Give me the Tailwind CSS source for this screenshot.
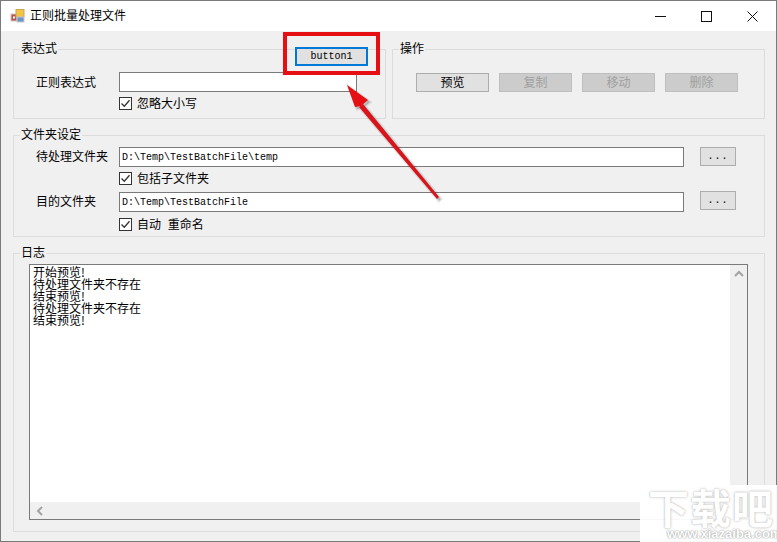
<!DOCTYPE html>
<html lang="zh-CN">
<head>
  <meta charset="UTF-8" />
  <title>正则批量处理文件</title>
  <script src="https://cdn.jsdelivr.net/npm/@tailwindcss/browser@4"></script>
</head>
<body class="overflow-hidden bg-white">
  <div class="relative flex flex-col w-[777px] h-[542px] border border-[#7a7a7a] bg-[#f0f0f0] text-[12px] leading-[14px] text-black font-['Noto_Sans_CJK_SC','Noto_Sans',sans-serif]">

    <!-- title bar -->
    <div class="flex items-center h-[30px] shrink-0 bg-white">
      <svg class="ml-[9px] w-[16px] h-[16px]" viewBox="0 0 16 16">
        <rect x="1" y="6" width="6" height="7" fill="#b9534f" stroke="#c9c9c9"/>
        <rect x="6" y="1.5" width="8" height="7.5" fill="#f3c344" stroke="#c9a85a"/>
        <rect x="7" y="9" width="7" height="5" fill="#6d94c9" stroke="#c9c9c9"/>
        <rect x="3" y="8.5" width="2" height="2" fill="#fff"/>
      </svg>
      <span class="ml-[4px] pb-[2px] text-[12px]">正则批量处理文件</span>
      <div class="ml-auto flex items-center gap-[35px] mr-[18px]">
        <svg class="w-[11px] h-[11px]" viewBox="0 0 11 11"><path d="M0 5.5H11" stroke="#111" fill="none"/></svg>
        <svg class="w-[11px] h-[11px]" viewBox="0 0 11 11"><rect x=".5" y=".5" width="10" height="10" stroke="#111" fill="none"/></svg>
        <svg class="w-[11px] h-[11px]" viewBox="0 0 11 11"><path d="M.5 .5L10.5 10.5M10.5 .5L.5 10.5" stroke="#111" fill="none"/></svg>
      </div>
    </div>

    <div class="flex flex-col pl-[12px] pt-[18px]">
      <div class="flex gap-[6px]">
        <!-- 表达式 -->
        <div class="relative w-[373px] h-[70px] border border-[#dcdcdc] pt-[22px] pl-[22px]">
          <span class="absolute -top-[9px] left-[6px] px-[1px] bg-[#f0f0f0]">表达式</span>
          <div class="flex items-center">
            <span class="w-[83px] pb-[1px]">正则表达式</span>
            <div class="w-[238px] h-[20px] border border-[#7a7a7a] bg-white"></div>
          </div>
          <label class="flex items-center ml-[83px] mt-[5px] h-[13px]">
            <span class="flex items-center justify-center w-[13px] h-[13px] border border-[#333] bg-white">
              <svg class="w-[11px] h-[11px]" viewBox="0 0 11 11"><path d="M1.5 5.5L4.3 8.3L9.5 2.3" stroke="#333" stroke-width="1.3" fill="none"/></svg>
            </span>
            <span class="ml-[5px] pb-[2px]">忽略大小写</span>
          </label>
        </div>
        <!-- 操作 -->
        <div class="relative w-[373px] h-[70px] border border-[#dcdcdc] pt-[23px] pl-[23px]">
          <span class="absolute -top-[9px] left-[6px] px-[1px] bg-[#f0f0f0]">操作</span>
          <div class="flex gap-[10px]">
            <div class="flex items-center justify-center w-[73px] h-[19px] pb-[2px] border border-[#adadad] bg-[#e1e1e1]">预览</div>
            <div class="flex items-center justify-center w-[73px] h-[19px] pb-[2px] border border-[#bfbfbf] bg-[#cccccc] text-[#a0a0a0]">复制</div>
            <div class="flex items-center justify-center w-[73px] h-[19px] pb-[2px] border border-[#bfbfbf] bg-[#cccccc] text-[#a0a0a0]">移动</div>
            <div class="flex items-center justify-center w-[73px] h-[19px] pb-[2px] border border-[#bfbfbf] bg-[#cccccc] text-[#a0a0a0]">删除</div>
          </div>
        </div>
      </div>

      <!-- 文件夹设定 -->
      <div class="relative w-[752px] h-[102px] mt-[16px] border border-[#dcdcdc] pt-[11px] pl-[22px]">
        <span class="absolute -top-[9px] left-[6px] px-[1px] bg-[#f0f0f0]">文件夹设定</span>
        <div class="flex items-center">
          <span class="w-[83px] pb-[2px]">待处理文件夹</span>
          <div class="flex items-center w-[565px] h-[20px] border border-[#7a7a7a] bg-white pl-[2px] pt-[1px] font-['Liberation_Mono',monospace] text-[10px]">D:\Temp\TestBatchFile\temp</div>
          <div class="flex items-center justify-center ml-[16px] -mt-[1px] w-[36px] h-[19px] border border-[#adadad] bg-[#e1e1e1] font-['Liberation_Mono',monospace] text-[10px] tracking-[1px]">...</div>
        </div>
        <label class="flex items-center ml-[83px] mt-[5px] h-[13px]">
          <span class="flex items-center justify-center w-[13px] h-[13px] border border-[#333] bg-white">
            <svg class="w-[11px] h-[11px]" viewBox="0 0 11 11"><path d="M1.5 5.5L4.3 8.3L9.5 2.3" stroke="#333" stroke-width="1.3" fill="none"/></svg>
          </span>
          <span class="ml-[5px] pb-[2px]">包括子文件夹</span>
        </label>
        <div class="flex items-center mt-[7px]">
          <span class="w-[83px] pb-[2px]">目的文件夹</span>
          <div class="flex items-center w-[565px] h-[20px] border border-[#7a7a7a] bg-white pl-[2px] pt-[1px] font-['Liberation_Mono',monospace] text-[10px]">D:\Temp\TestBatchFile</div>
          <div class="flex items-center justify-center ml-[16px] -mt-[3px] w-[36px] h-[19px] border border-[#adadad] bg-[#e1e1e1] font-['Liberation_Mono',monospace] text-[10px] tracking-[1px]">...</div>
        </div>
        <label class="flex items-center ml-[83px] mt-[6px] h-[13px]">
          <span class="flex items-center justify-center w-[13px] h-[13px] border border-[#333] bg-white">
            <svg class="w-[11px] h-[11px]" viewBox="0 0 11 11"><path d="M1.5 5.5L4.3 8.3L9.5 2.3" stroke="#333" stroke-width="1.3" fill="none"/></svg>
          </span>
          <span class="ml-[5px] pb-[2px] [word-spacing:4px]">自动 重命名</span>
        </label>
      </div>

      <!-- 日志 -->
      <div class="relative w-[752px] h-[279px] mt-[16px] border border-[#dcdcdc] pt-[10px] pl-[15px]">
        <span class="absolute -top-[9px] left-[6px] px-[1px] bg-[#f0f0f0]">日志</span>
        <div class="flex w-[719px] h-[256px] border border-[#7a7a7a] bg-white">
          <div class="flex flex-col flex-1">
            <div class="flex-1 pl-[3px] pt-[1px] leading-[12px]">
              <p>开始预览!</p>
              <p>待处理文件夹不存在</p>
              <p>结束预览!</p>
              <p>待处理文件夹不存在</p>
              <p>结束预览!</p>
            </div>
            <div class="flex items-center h-[17px] bg-[#f0f0f0] pl-[6px]">
              <svg class="w-[8px] h-[10px]" viewBox="0 0 8 10"><path d="M6 1L2 5L6 9" stroke="#a3a3a3" stroke-width="2" fill="none"/></svg>
            </div>
          </div>
          <div class="w-[17px] bg-[#f0f0f0] pt-[5px] flex justify-center">
            <svg class="w-[10px] h-[8px]" viewBox="0 0 10 8"><path d="M1 6L5 2L9 6" stroke="#a3a3a3" stroke-width="2" fill="none"/></svg>
          </div>
        </div>
      </div>
    </div>

    <!-- annotation added over the window -->
    <div class="absolute left-[282px] top-[31px] w-[97px] h-[43px] border-[4px] border-[#e50f14]">
      <div class="flex items-center justify-center ml-[8px] mt-[11px] w-[73px] h-[19px] border-2 border-[#0078d7] bg-[#e1e1e1] font-['Liberation_Mono',monospace] text-[10px]">button1</div>
    </div>
    <svg class="absolute left-0 top-0 w-[775px] h-[540px] pointer-events-none" viewBox="0 0 775 540">
      <path d="M362 103L358 106L436 198L438 196Z M346 84L367 99L360 105L354 106Z" transform="translate(2 2)" fill="#00000030" stroke="#00000018" stroke-width="3"/>
      <path d="M362 103L358 106L436 198L438 196Z" fill="#d9141a"/>
      <path d="M346 84L367 99L360 105L354 106Z" fill="#e50f14"/>
    </svg>

    <!-- watermark -->
    <div class="absolute -right-[1px] -bottom-[1px] w-[137px] h-[57px] bg-white/95 overflow-hidden">
      <div class="pl-[8px] text-[41px] leading-[42px] tracking-[1px] font-bold whitespace-nowrap text-white [text-shadow:0_0_1px_#bdbdbd,0_0_3px_#bdbdbd]">下载吧</div>
      <div class="pl-[27px] text-[13px] leading-[13px] font-bold text-white [text-shadow:0_0_1px_#9d9d9d,0_0_2px_#9d9d9d] font-['Liberation_Sans',sans-serif] whitespace-nowrap">www.xiazaiba.com</div>
    </div>
  </div>
</body>
</html>
